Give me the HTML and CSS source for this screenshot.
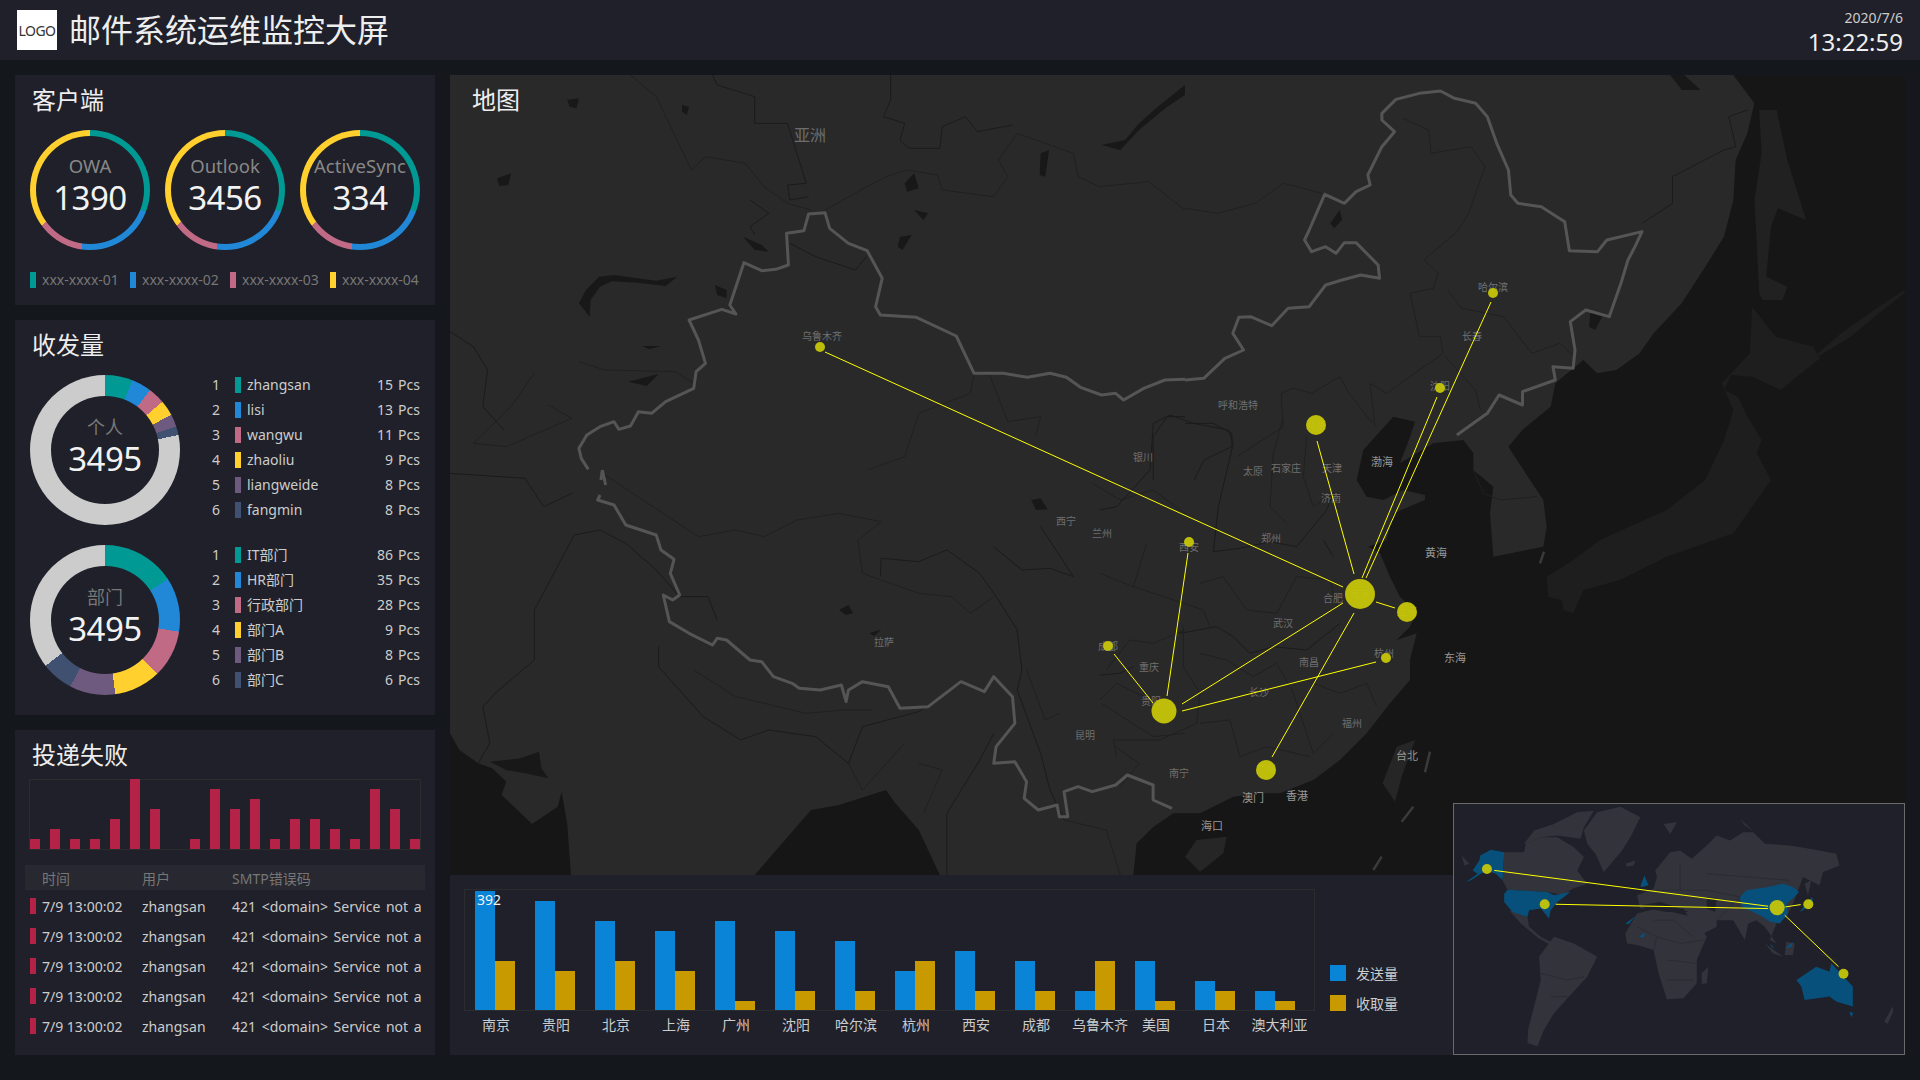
FILE: index.html
```html
<!DOCTYPE html>
<html lang="zh-CN">
<head>
<meta charset="utf-8">
<title>邮件系统运维监控大屏</title>
<link rel="stylesheet" href="styles.css">
</head>
<body>
<header class="topbar">
  <div class="brand"><div class="logo">LOGO</div><h1>邮件系统运维监控大屏</h1></div>
  <div class="clock"><div class="date">2020/7/6</div><div class="time">13:22:59</div></div>
</header>
<div class="content">
  <aside class="side">
    <section class="panel p-client">
      <h2>客户端</h2>
      <div class="rings">
        <div class="ring"><div class="ring-in"><span class="ring-label">OWA</span><span class="ring-num">1390</span></div></div>
        <div class="ring"><div class="ring-in"><span class="ring-label">Outlook</span><span class="ring-num">3456</span></div></div>
        <div class="ring"><div class="ring-in"><span class="ring-label">ActiveSync</span><span class="ring-num">334</span></div></div>
      </div>
      <div class="legend">
        <div class="leg"><i class="sw c1"></i>xxx-xxxx-01</div>
        <div class="leg"><i class="sw c2"></i>xxx-xxxx-02</div>
        <div class="leg"><i class="sw c3"></i>xxx-xxxx-03</div>
        <div class="leg"><i class="sw c4"></i>xxx-xxxx-04</div>
      </div>
    </section>
    <section class="panel p-volume">
      <h2>收发量</h2>
      <div class="stat">
        <div class="donut d-person"><div class="donut-in"><span class="donut-label">个人</span><span class="donut-num">3495</span></div></div>
        <ul class="rank">
          <li><span class="idx">1</span><i class="sw c1"></i><span class="nm">zhangsan</span><span class="n">15</span><span class="u">Pcs</span></li>
          <li><span class="idx">2</span><i class="sw c2"></i><span class="nm">lisi</span><span class="n">13</span><span class="u">Pcs</span></li>
          <li><span class="idx">3</span><i class="sw c3"></i><span class="nm">wangwu</span><span class="n">11</span><span class="u">Pcs</span></li>
          <li><span class="idx">4</span><i class="sw c4"></i><span class="nm">zhaoliu</span><span class="n">9</span><span class="u">Pcs</span></li>
          <li><span class="idx">5</span><i class="sw c5"></i><span class="nm">liangweide</span><span class="n">8</span><span class="u">Pcs</span></li>
          <li><span class="idx">6</span><i class="sw c6"></i><span class="nm">fangmin</span><span class="n">8</span><span class="u">Pcs</span></li>
        </ul>
      </div>
      <div class="stat">
        <div class="donut d-dept"><div class="donut-in"><span class="donut-label">部门</span><span class="donut-num">3495</span></div></div>
        <ul class="rank">
          <li><span class="idx">1</span><i class="sw c1"></i><span class="nm">IT部门</span><span class="n">86</span><span class="u">Pcs</span></li>
          <li><span class="idx">2</span><i class="sw c2"></i><span class="nm">HR部门</span><span class="n">35</span><span class="u">Pcs</span></li>
          <li><span class="idx">3</span><i class="sw c3"></i><span class="nm">行政部门</span><span class="n">28</span><span class="u">Pcs</span></li>
          <li><span class="idx">4</span><i class="sw c4"></i><span class="nm">部门A</span><span class="n">9</span><span class="u">Pcs</span></li>
          <li><span class="idx">5</span><i class="sw c5"></i><span class="nm">部门B</span><span class="n">8</span><span class="u">Pcs</span></li>
          <li><span class="idx">6</span><i class="sw c6"></i><span class="nm">部门C</span><span class="n">6</span><span class="u">Pcs</span></li>
        </ul>
      </div>
    </section>
    <section class="panel p-fail">
      <h2>投递失败</h2>
      <div class="failchart">
        <div class="fb"><i style="height:10px"></i></div><div class="fb"><i style="height:20px"></i></div><div class="fb"><i style="height:10px"></i></div><div class="fb"><i style="height:10px"></i></div><div class="fb"><i style="height:30px"></i></div><div class="fb"><i style="height:70px"></i></div><div class="fb"><i style="height:40px"></i></div><div class="fb"><i style="height:0"></i></div><div class="fb"><i style="height:10px"></i></div><div class="fb"><i style="height:60px"></i></div><div class="fb"><i style="height:40px"></i></div><div class="fb"><i style="height:50px"></i></div><div class="fb"><i style="height:10px"></i></div><div class="fb"><i style="height:30px"></i></div><div class="fb"><i style="height:30px"></i></div><div class="fb"><i style="height:20px"></i></div><div class="fb"><i style="height:10px"></i></div><div class="fb"><i style="height:60px"></i></div><div class="fb"><i style="height:40px"></i></div><div class="fb"><i style="height:10px"></i></div>
      </div>
      <div class="ftable">
        <div class="fhead"><span class="col-t">时间</span><span class="col-u">用户</span><span class="col-m">SMTP错误码</span></div>
        <div class="frow"><i class="sw cr"></i><span class="col-t">7/9 13:00:02</span><span class="col-u">zhangsan</span><span class="col-m">421 &lt;domain&gt; Service not a</span></div>
        <div class="frow"><i class="sw cr"></i><span class="col-t">7/9 13:00:02</span><span class="col-u">zhangsan</span><span class="col-m">421 &lt;domain&gt; Service not a</span></div>
        <div class="frow"><i class="sw cr"></i><span class="col-t">7/9 13:00:02</span><span class="col-u">zhangsan</span><span class="col-m">421 &lt;domain&gt; Service not a</span></div>
        <div class="frow"><i class="sw cr"></i><span class="col-t">7/9 13:00:02</span><span class="col-u">zhangsan</span><span class="col-m">421 &lt;domain&gt; Service not a</span></div>
        <div class="frow"><i class="sw cr"></i><span class="col-t">7/9 13:00:02</span><span class="col-u">zhangsan</span><span class="col-m">421 &lt;domain&gt; Service not a</span></div>
      </div>
    </section>
  </aside>
  <main class="main">
    <section class="map">
      <svg class="mapsvg" viewBox="450 75 1455 800" width="1455" height="800" xmlns="http://www.w3.org/2000/svg">
        <!-- seas -->
        <g transform="translate(450 470) scale(.46875 .33333)" class="sea">
          <path d="M0 790L20 840 60 880 90 895 120 935 110 975 175 1062 230 1010 238 965 250 1060 258 1215 0 1215Z"/>
          <path d="M650 1215L770 1020 830 1005 930 960 950 1000 1000 1080 1045 1215Z"/>
          <path class="lake" d="M85 875L150 865 190 845 195 895 210 925 160 910 120 900Z"/>
        </g>
        <g transform="translate(1100 400) scale(.33333)">
          <path class="sea-p" d="M100 1425L110 1330 160 1281 220 1240 300 1240 400 1190 470 1180 540 1180 640 1140 720 1080 800 1000 870 910 930 840 930 780 950 700 890 720 930 680 950 640 900 590 870 530 840 460 805 440 860 420 880 340 975 300 975 285 910 270 850 300 800 290 770 240 790 150 880 50 945 65 930 110 900 190 1000 130 1090 120 1120 160 1120 210 1180 260 1170 340 1180 470 1330 440 1340 380 1330 300 1290 240 1225 140 1267 90 1352 20 1366 -50 1450 -120 1492 -80 1549 -90 1619 -140 1661 -200 1745 -290 1816 -400 1872 -490 1900 -600 1907 -720 1942 -800 1963 -890 1900 -975 2415 -975 2415 1425Z"/>
          <path class="island" d="M255 1370L290 1320 380 1310 370 1360 300 1415Z"/>
          <path class="island" d="M848 1150L890 1040 945 1020 905 1130 885 1205Z"/>
          <path class="jp" d="M1816 240L1700 330 1500 420 1420 480 1340 530 1345 590 1385 600 1390 630 1420 640 1450 570 1560 540 1700 470 1900 400 2013 240Z"/>
          <path class="dash" d="M975 1117L990 1055M905 1265L940 1220M820 1410L845 1370M1320 490L1332 455"/>
        </g>
        <g transform="translate(1185 60) scale(.46875 .33333)">
          <path class="jp2" d="M1225 150L1262 150 1285 300 1325 480 1265 445 1250 500 1240 650 1285 680 1275 720 1232 720 1225 700 1215 420 1230 280Z"/>
          <path class="jp" d="M1210 740L1260 830 1340 860 1355 895 1270 990 1210 950 1165 945 1150 990 1180 1010 1200 1070 1230 1140 1220 1180 1250 1260 1110 1260 1150 1140 1170 1050 1145 970 1205 880Z"/>
          <path class="jp" d="M1350 880L1400 820 1480 740 1535 690 1535 700 1480 760 1420 830 1350 890Z"/>
        </g>
        <!-- thin borders, north-west -->
        <g transform="translate(450 60) scale(.46875 .33333)">
          <path class="lake" d="M1390 255L1430 270 1470 210 1530 140 1568 105 1568 75 1510 140 1470 190 1440 240Z"/>
          <path class="lake" d="M275 730L298 770 300 720 320 680 345 664 400 668 460 678 485 650 440 662 400 655 350 645 318 650 290 690Z"/>
          <path class="lake" d="M100 355L130 340 125 375 105 378ZM250 120L275 115 270 145 255 140ZM495 135L510 140 505 165 495 155ZM970 370L990 340 1000 385 975 395ZM565 675L590 690 590 715 570 705ZM960 530L985 525 965 570 955 560ZM990 450L1020 460 1010 480ZM380 965L445 942 420 978ZM410 858L450 858 425 868ZM1260 280L1278 270 1270 350 1258 345ZM625 530L665 555 680 575 650 570Z"/>
          <path class="dark" d="M560 45L570 75 650 110 650 190 720 190 740 280 760 370 720 375 725 420 765 410M940 45L940 120 925 170 970 190 960 240 980 265 1045 265 1050 200 1100 170 1125 215 1200 195M640 420L680 460 640 500 650 525M0 815L50 860 80 930 70 1040 115 1110M725 550L780 590 865 630 888 590"/>
          <path class="thin" d="M385 45L440 110 515 330 545 290 630 310 670 380 720 430 770 450M800 450L870 395 930 350 975 330 1040 345 1050 390 1160 410 1190 350 1170 300 1210 220 1330 280 1340 350 1385 380 1490 365 1568 450M1118 940L1110 1000 1000 1060 970 1190 890 1230M1150 940L1190 1085 1260 1070 1250 1125M275 905L330 930 480 935 520 970M180 940L130 1040 50 1150 120 1160 260 1075 210 1035"/>
          <path class="dark" d="M1500 1260L1500 1130 1530 1070 1568 1070"/>
        </g>
        <!-- thin borders, south-west -->
        <g transform="translate(450 470) scale(.46875 .33333)">
          <path class="dark" d="M265 195L320 180 375 220 440 300 490 380 550 380 570 450M265 195L180 420 180 570 100 665 70 710 85 820 60 880M445 530L445 590 540 740 620 810 680 780 780 800 850 880 880 770 1000 725 1090 640M1060 1215L1060 1030 1130 870 1160 790M918 320L920 265 1000 275 1060 240 1130 310 1170 390 1210 480 1220 600 1210 660 1260 850 1280 960 1310 1050M1260 170L1330 320 1280 295 1220 300 1160 230M0 10L160 25 200 110 260 70"/>
          <path class="thin" d="M325 10L530 200 610 180 670 200 740 150 830 130 920 155 870 210 880 310 1000 370 1070 380 1110 430 1160 380M520 600L610 680 760 730 840 720 900 720M1370 40L1430 90 1500 60 1568 130M1400 600L1450 510 1500 520 1568 480M1390 700L1500 800 1568 790M1420 830L1470 880 1430 950M1230 600L1270 750 1300 730M1310 1050L1400 1080 1430 1215M1000 880L1050 900 1010 1030M850 880L880 960 970 820"/>
          <path class="lake" d="M1240 90L1260 85 1275 118 1250 120ZM830 420L850 405 860 430 845 435ZM895 490L920 478 905 498Z"/>
        </g>
        <!-- thin borders, north-east -->
        <g transform="translate(1185 60) scale(.46875 .33333)">
          <path class="lake" d="M310 490L330 450 335 480 318 505ZM865 755L890 770 875 810 862 800ZM1035 45L1065 45 1100 90 1060 90Z"/>
          <path class="dark" d="M975 490L1040 430 1040 350 1150 270 1175 260 1160 170 1200 150M0 1090L60 1090 100 1120 100 1160 40 1200 20 1260"/>
          <path class="thin" d="M0 445L70 460 150 430 210 370 265 390 298 403M465 175L520 210 525 280 610 260 640 320 605 460 580 515 510 600 540 640 530 685 480 700 500 830 545 830 550 880 430 1000 395 970 405 1100M560 690L590 745 680 770 740 880 800 850 830 890M555 890L620 990 630 1050M205 1000L230 985 270 1000 330 950 350 1000 400 1090M205 1000L210 1100 110 1190"/>
        </g>
        <!-- thin borders, east -->
        <g transform="translate(1100 400) scale(.33333)">
          <path class="dark" d="M0 330L50 320 150 210 160 70 210 45 280 70 385 90 400 130 355 320 340 455 420 445 510 425 590 440 680 330 700 280M240 700L350 680 400 710 450 760 520 740 620 750 720 670M670 420L700 470M0 825L60 820 100 800"/>
          <path class="thin" d="M550 50L520 160 510 320 560 370M620 110L610 230 640 320 700 280M140 430L100 560 0 520M100 560L310 630 330 680M300 550L370 530 440 630 530 640 590 530 690 540 710 620M250 680L250 800 300 880 290 970 180 1020 40 1020 50 1070M300 760L380 780 460 830 530 790M300 970L390 960 420 1070 500 1040 630 1070M530 790L580 880 640 1060M640 850L720 880 800 850 830 920M640 1060L700 1000M0 900L50 850 130 890M1120 210L1150 280 1200 300 1310 290"/>
        </g>
        <!-- China national border -->
        <g transform="translate(450 60) scale(.46875 .33333)">
          <path class="cn" d="M295 1228L280 1195 275 1165 292 1125 320 1100 350 1085 360 1108 385 1098 402 1055 430 1060 460 1025 520 985 525 935 545 910 530 840 510 780 580 748 610 762 597 735 627 608 665 632 695 628 722 615 718 520 755 512 765 462 800 458 810 505 850 550 890 572 922 655 908 740 918 765 995 772 1080 828 1118 940 1180 940 1232 952 1280 940 1315 952 1345 982 1390 1005 1420 1000 1437 1020 1480 985 1525 960 1568 958"/>
          <path class="cn" d="M325 1230L322 1260"/>
        </g>
        <g transform="translate(1185 60) scale(.46875 .33333)">
          <path class="cn" d="M0 960L40 955 85 895 125 870 102 820 115 772 140 770 185 797 220 745 265 740 300 675 335 660 375 645 415 655 412 615 365 548 340 548 322 580 300 560 270 575 255 540 265 510 298 403 340 430 365 395 395 375 390 345 420 260 447 215 420 180 420 160 450 118 500 100 545 93 575 115 620 130 645 170 665 250 690 330 695 405 710 430 760 440 810 485 820 572 880 575 900 540 975 515 960 560 945 600 930 670 905 770 855 750 822 785 832 870 828 925 785 920 790 960 720 995 720 1035 670 1005 645 1060 580 1125"/>
        </g>
        <g transform="translate(450 470) scale(.46875 .33333)">
          <path class="cn" d="M325 0L332 45M320 75L315 90 350 105 375 165 440 195 450 240 478 268 470 310 490 375 475 390 455 375 468 455 510 490 560 525 570 505 590 510 640 570 665 575 690 620 730 640 745 655 790 660 835 645 845 695 850 660 880 635 935 650 960 715 1020 710 1090 635 1140 665 1160 620 1200 680 1205 760 1165 830 1160 880 1205 875 1230 935 1225 985 1255 1020 1295 1005 1300 1040 1318 1040 1310 965 1340 950 1370 965 1420 945 1445 915 1500 945 1500 990 1540 1015"/>
        </g>
        <!-- labels -->
        <g class="lbl">
          <text x="1238" y="405">呼和浩特</text><text x="1143" y="457">银川</text><text x="1253" y="471">太原</text><text x="1286" y="468">石家庄</text><text x="1332" y="468">天津</text><text x="1331" y="498">济南</text><text x="1189" y="547">西安</text><text x="1271" y="538">郑州</text><text x="1333" y="598">合肥</text><text x="1360" y="594">南京</text><text x="1407" y="611">上海</text><text x="1283" y="623">武汉</text><text x="1309" y="662">南昌</text><text x="1384" y="653">杭州</text><text x="1259" y="692">长沙</text><text x="1149" y="667">重庆</text><text x="1151" y="701">贵阳</text><text x="1108" y="646">成都</text><text x="1352" y="723">福州</text><text x="1179" y="773">南宁</text><text x="1266" y="768">广州</text><text x="1085" y="735">昆明</text><text x="884" y="642">拉萨</text><text x="1066" y="521">西宁</text><text x="1102" y="533">兰州</text><text x="822" y="336">乌鲁木齐</text><text x="1493" y="287">哈尔滨</text><text x="1472" y="336">长春</text><text x="1440" y="386">沈阳</text><text x="1316" y="425">北京</text>
        </g>
        <g class="lbl lbl-b">
          <text x="1382" y="461">渤海</text><text x="1436" y="552">黄海</text><text x="1455" y="657">东海</text><text x="1253" y="797">澳门</text><text x="1297" y="795">香港</text><text x="1407" y="755">台北</text><text x="1212" y="825">海口</text>
        </g>
        <text class="lbl-big" x="810" y="135">亚洲</text>
        <!-- flows -->
        <g class="flow">
          <line x1="825" y1="352" x2="1343" y2="587"/><line x1="1317" y1="441" x2="1354" y2="574"/><line x1="1437" y1="397" x2="1362" y2="578"/><line x1="1491" y1="302" x2="1366" y2="578"/><line x1="1376" y1="602" x2="1395" y2="608"/><line x1="1188" y1="553" x2="1167" y2="696"/><line x1="1114" y1="654" x2="1153" y2="703"/><line x1="1343" y1="603" x2="1182" y2="704"/><line x1="1376" y1="662" x2="1182" y2="711"/><line x1="1354" y1="613" x2="1272" y2="757"/>
        </g>
        <g class="dots">
          <circle cx="820" cy="347" r="5"/><circle cx="1493" cy="293" r="5"/><circle cx="1440" cy="388" r="5"/><circle cx="1316" cy="425" r="10"/><circle cx="1189" cy="542" r="5"/><circle cx="1360" cy="594" r="15"/><circle cx="1407" cy="612" r="10"/><circle cx="1386" cy="658" r="5"/><circle cx="1164" cy="711" r="12.5"/><circle cx="1108" cy="646" r="5"/><circle cx="1266" cy="770" r="10"/>
        </g>
      </svg>
      <h2 class="map-title">地图</h2>
    </section>
    <section class="bottom">
      <div class="barwrap">
        <div class="barbox">
          <div class="grp"><i class="bl" style="height:119px"><em>392</em></i><i class="yl" style="height:49px"></i></div>
          <div class="grp"><i class="bl" style="height:109px"></i><i class="yl" style="height:39px"></i></div>
          <div class="grp"><i class="bl" style="height:89px"></i><i class="yl" style="height:49px"></i></div>
          <div class="grp"><i class="bl" style="height:79px"></i><i class="yl" style="height:39px"></i></div>
          <div class="grp"><i class="bl" style="height:89px"></i><i class="yl" style="height:9px"></i></div>
          <div class="grp"><i class="bl" style="height:79px"></i><i class="yl" style="height:19px"></i></div>
          <div class="grp"><i class="bl" style="height:69px"></i><i class="yl" style="height:19px"></i></div>
          <div class="grp"><i class="bl" style="height:39px"></i><i class="yl" style="height:49px"></i></div>
          <div class="grp"><i class="bl" style="height:59px"></i><i class="yl" style="height:19px"></i></div>
          <div class="grp"><i class="bl" style="height:49px"></i><i class="yl" style="height:19px"></i></div>
          <div class="grp"><i class="bl" style="height:19px"></i><i class="yl" style="height:49px"></i></div>
          <div class="grp"><i class="bl" style="height:49px"></i><i class="yl" style="height:9px"></i></div>
          <div class="grp"><i class="bl" style="height:29px"></i><i class="yl" style="height:19px"></i></div>
          <div class="grp"><i class="bl" style="height:19px"></i><i class="yl" style="height:9px"></i></div>
        </div>
        <div class="barlabels"><span>南京</span><span>贵阳</span><span>北京</span><span>上海</span><span>广州</span><span>沈阳</span><span>哈尔滨</span><span>杭州</span><span>西安</span><span>成都</span><span class="sh">乌鲁木齐</span><span>美国</span><span>日本</span><span class="sh2">澳大利亚</span></div>
      </div>
      <div class="barlegend">
        <div class="bleg"><i class="sq bl"></i>发送量</div>
        <div class="bleg"><i class="sq yl"></i>收取量</div>
      </div>
    </section>
    <div class="mini">
      <svg viewBox="40 70 1353 753" width="450" height="250" xmlns="http://www.w3.org/2000/svg">
        <g class="w-land">
          <path d="M430 150L470 95 540 78 600 110 570 170 545 210 490 275 465 220 440 190Z"/>
          <path d="M250 190L280 150 340 130 410 95 460 90 430 140 420 175 350 165 300 170 255 190Z"/>
          <path d="M190 215L250 215 255 190 300 170 350 170 400 200 430 230 410 270 440 310 395 325 370 345 320 335 200 328 185 300Z"/>
          <path d="M205 390L260 410 265 440 300 470 340 490 330 495 295 475 240 430Z"/>
          <path d="M295 530L340 470 400 490 470 530 440 590 385 650 340 700 310 750 290 800 260 790 262 750 280 680 300 600Z"/>
          <path d="M555 460L590 400 650 385 760 410 800 470 770 540 770 610 730 655 680 658 655 580 640 510 590 495 560 490Z"/>
          <path d="M785 580L805 560 800 610 785 612Z"/>
          <path d="M590 345L640 325 650 290 645 270 690 215 720 210 755 235 800 195 830 165 870 180 910 155 940 155 975 190 1050 195 1110 205 1190 220 1200 255 1150 275 1140 315 1090 290 1075 330 1060 370 1040 410 1010 430 990 480 1010 490 975 440 950 420 925 430 915 480 880 420 830 420 830 440 780 465 745 410 730 385 650 380 600 385Z"/>
          <path d="M555 250L585 240 580 255 560 258ZM670 130L710 125 690 160ZM900 115L940 150 915 135ZM1095 310L1115 300 1105 345ZM1120 510L1200 545 1160 530ZM1040 485L1065 490 1060 525 1035 525ZM975 490L1030 530 1000 520ZM1335 725L1360 680 1362 695 1345 732ZM62 225L85 250 70 255Z"/>
        </g>
        <path class="w-gap" d="M600 375L660 365 720 385 745 395 680 395 620 385ZM800 350L830 355 825 395 800 385Z"/>
        <g class="w-line">
          <path d="M640 420L700 420 760 470M650 470L720 490 790 480M680 540L770 550M680 600L760 600M590 440L650 470 640 510M300 580L380 600 430 590M330 650L380 650M650 330L800 330 900 350M800 280L1050 300M830 420L900 350M720 250L720 330"/>
        </g>
        <g class="w-hi">
          <path d="M118 225L150 208 190 215 185 300 165 280 135 270 90 300 75 305 110 280 95 270 115 240Z"/>
          <path d="M190 340L200 328 320 335 340 345 390 335 350 365 330 390 325 415 300 385 265 390 260 410 215 395 190 365Z"/>
          <path d="M900 350L920 330 985 320 1030 310 1060 320 1078 335 1060 355 1040 370 1045 400 1020 430 990 425 970 410 940 395 905 380Z"/>
          <path d="M1070 600L1130 560 1170 575 1175 550 1240 620 1240 680 1190 665 1170 650 1095 660 1085 620Z"/>
          <path d="M1230 695L1242 700 1235 712ZM600 318L612 285 625 315 605 320ZM555 430L585 408 565 432ZM595 470L615 458 610 472ZM1080 395L1100 370 1118 350 1120 365 1090 390ZM1035 505L1060 485 1055 500ZM990 490L1005 505 995 500Z"/>
        </g>
        <g class="flow">
          <line x1="160" y1="270" x2="985" y2="378"/><line x1="345" y1="372" x2="985" y2="385"/><line x1="1037" y1="380" x2="1083" y2="373"/><line x1="1035" y1="405" x2="1197" y2="560"/>
        </g>
        <g class="dots">
          <circle cx="138" cy="266" r="15"/><circle cx="312" cy="372" r="15"/><circle cx="1012" cy="382" r="23"/><circle cx="1106" cy="372" r="15"/><circle cx="1212" cy="581" r="15"/>
        </g>
      </svg>
    </div>
  </main>
</div>
</body>
</html>
```
FILE: styles.css
```css
*{box-sizing:border-box}
html,body{margin:0;padding:0;height:100%}
body{width:1920px;height:1080px;overflow:hidden;background:#14171c;color:#ccc;font-family:"Noto Sans","Noto Sans CJK SC",sans-serif;font-size:14px}
h1,h2,ul{margin:0;padding:0;font-weight:400}
li{list-style:none}
i,em{font-style:normal;display:block}

.topbar{height:60px;background:#1f2029;display:flex;justify-content:space-between;align-items:center;padding:0 17px}
.brand{display:flex;align-items:center;gap:12px}
.logo{width:40px;height:40px;background:#fff;color:#333;font-size:14px;display:flex;align-items:center;justify-content:center;letter-spacing:-.5px}
h1{font-size:32px;line-height:40px;color:#eee}
.clock{text-align:right;color:#eee}
.date{font-size:14px;line-height:16px;margin-top:7px;color:#ccc}
.time{font-size:24px;line-height:32px}

.content{display:grid;grid-template-columns:420px 1455px;gap:15px;padding:15px}
.side{display:flex;flex-direction:column;gap:15px}
.panel{background:#1f2029;padding:0 15px;overflow:hidden}
.panel h2{font-size:24px;line-height:50px;height:50px;color:#eee;padding-left:2px}
.p-client{height:230px}
.p-volume{height:395px}
.p-fail{height:325px}

.sw{width:6px;height:16px;flex:none}
.c1{background:#009994}.c2{background:#2188d8}.c3{background:#c06a85}.c4{background:#ffd02e}.c5{background:#6e5a7e}.c6{background:#3f5070}.cr{background:#b52247}

.rings{display:flex;gap:15px;margin-top:5px}
.ring{width:120px;height:120px;border-radius:50%;padding:6px;background:conic-gradient(#009994 0 111.5deg,#2188d8 111.5deg 188deg,#c06a85 188deg 234deg,#ffd02e 234deg 360deg)}
.ring-in{width:108px;height:108px;border-radius:50%;background:#1f2029;display:flex;flex-direction:column;align-items:center;padding-top:16px}
.ring-label{font-size:18.5px;line-height:28px;color:#888;white-space:nowrap}
.ring-num{font-size:33px;line-height:40px;letter-spacing:-.5px;color:#f2f2f2;margin-top:-2px}
.legend{display:flex;margin-top:22px}
.leg{width:100px;flex:none;display:flex;align-items:center;gap:6px;color:#777;font-size:14px;line-height:16px;white-space:nowrap}

.stat{display:flex;margin-top:5px;height:150px;margin-bottom:20px}
.donut{width:150px;height:150px;border-radius:50%;padding:21px;flex:none}
.d-person{background:conic-gradient(#009994 0 21.5deg,#2188d8 21.5deg 36.9deg,#c06a85 36.9deg 50deg,#ffd02e 50deg 62deg,#6e5a7e 62deg 71.8deg,#3f5070 71.8deg 78.5deg,#ccc 78.5deg 360deg)}
.d-dept{background:conic-gradient(#009994 0 57deg,#2188d8 57deg 99deg,#c06a85 99deg 136deg,#ffd02e 136deg 172deg,#6e5a7e 172deg 207.5deg,#3f5070 207.5deg 232.4deg,#ccc 232.4deg 360deg)}
.donut-in{width:108px;height:108px;border-radius:50%;background:#1f2029;display:flex;flex-direction:column;align-items:center;padding-top:18px}
.donut-label{font-size:18px;line-height:26px;color:#777}
.donut-num{font-size:33px;line-height:40px;letter-spacing:-.5px;color:#f2f2f2;margin-top:-1px}
.p-volume .stat+.stat{margin-top:0}
.rank{flex:1;margin:-3px 0 0 26px}
.rank li{height:25px;display:flex;align-items:center;line-height:25px;color:#ccc;font-size:14px}
.idx{width:20px;text-align:center;margin-right:9px}
.nm{flex:1;margin-left:6px}
.n{width:24px;text-align:right}
.u{width:27px;text-align:right}

.failchart{display:flex;height:71px;width:392px;margin:-1px 0 0 -1px;border:1px solid #2b2c2e;align-items:flex-end}
.fb{width:20px;flex:none;display:flex;align-items:flex-end;height:100%}
.fb i{width:10px;background:#b52247}
.ftable{margin:15px -5px 0}
.fhead{height:25px;background:#272830;display:flex;align-items:center;padding-left:17px;color:#777;margin-bottom:1px}
.frow{height:30px;display:flex;align-items:center;padding-left:5px;color:#ccc}
.frow .sw{margin-right:6px}
.col-t{width:100px;white-space:nowrap}
.col-u{width:90px;white-space:nowrap}
.col-m{width:190px;white-space:nowrap}
.frow .col-m{word-spacing:2px}

.main{position:relative;display:flex;flex-direction:column}
.map{height:800px;position:relative;background:#292929;overflow:hidden}
.mapsvg{display:block}
.map-title{position:absolute;left:22px;top:0;font-size:24px;line-height:50px;color:#eee}
.mapsvg path{vector-effect:non-scaling-stroke}
.sea path,.sea-p{fill:#161616}
.mapsvg .lake{fill:#181818;stroke:none}
.island{fill:#262626}
.jp{fill:#1e1e1e}
.jp2{fill:#212121}
.dash{fill:none;stroke:#3a3a3a;stroke-width:2.5}
.dark{fill:none;stroke:#1b1b1b;stroke-width:1}
.thin{fill:none;stroke:#202020;stroke-width:1}
.cn{fill:none;stroke:#555;stroke-width:3;stroke-linejoin:round}
.lbl text{font-size:10px;fill:#707070;text-anchor:middle;dominant-baseline:central}
.lbl-b text{fill:#999;font-size:11px}
.lbl-big{font-size:16px;fill:#6c6c6c;text-anchor:middle;dominant-baseline:central}
.flow line{stroke:#ff0;stroke-width:1;vector-effect:non-scaling-stroke}
.dots circle{fill:#c8c808;fill-opacity:.93}

.bottom{height:180px;background:#1f2029;display:flex;padding:14px 0 0 14px;gap:15px}
.barwrap{width:851px}
.barbox{height:122px;border:1px solid #2b2c2e;display:grid;grid-template-columns:repeat(14,60px);align-items:end}
.grp{display:flex;justify-content:center;align-items:flex-end}
.grp i{width:20px;position:relative}
.bl{background:#0a84d6}
.yl{background:#c99a00}
.grp em{position:absolute;left:2px;top:-1px;font-size:14px;line-height:20px;color:#f2f2f2}
.barlabels{display:grid;grid-template-columns:repeat(14,60px);margin-left:2px;height:28px;line-height:28px;text-align:center;color:#ccc;font-size:14px}
.barlabels span{white-space:nowrap}
.barlabels .sh{margin-left:2px;margin-right:-6px}
.barlabels .sh2{margin-left:1px;margin-right:-6px}
.barlegend{display:flex;flex-direction:column;gap:14px;margin-top:76px}
.bleg{display:flex;align-items:center;gap:10px;height:16px;color:#ccc;font-size:14px}
.sq{width:16px;height:16px}

.mini{position:absolute;right:0;bottom:0;width:452px;height:252px;border:1px solid #6a6a6a;background:#1f2029;overflow:hidden}
.mini svg{display:block}
.mini path{vector-effect:non-scaling-stroke}
.w-land path{fill:#33343b}
.w-gap{fill:#1f2029}
.w-line path{fill:none;stroke:#2a2b33;stroke-width:1}
.w-hi path{fill:#07507c}
```
